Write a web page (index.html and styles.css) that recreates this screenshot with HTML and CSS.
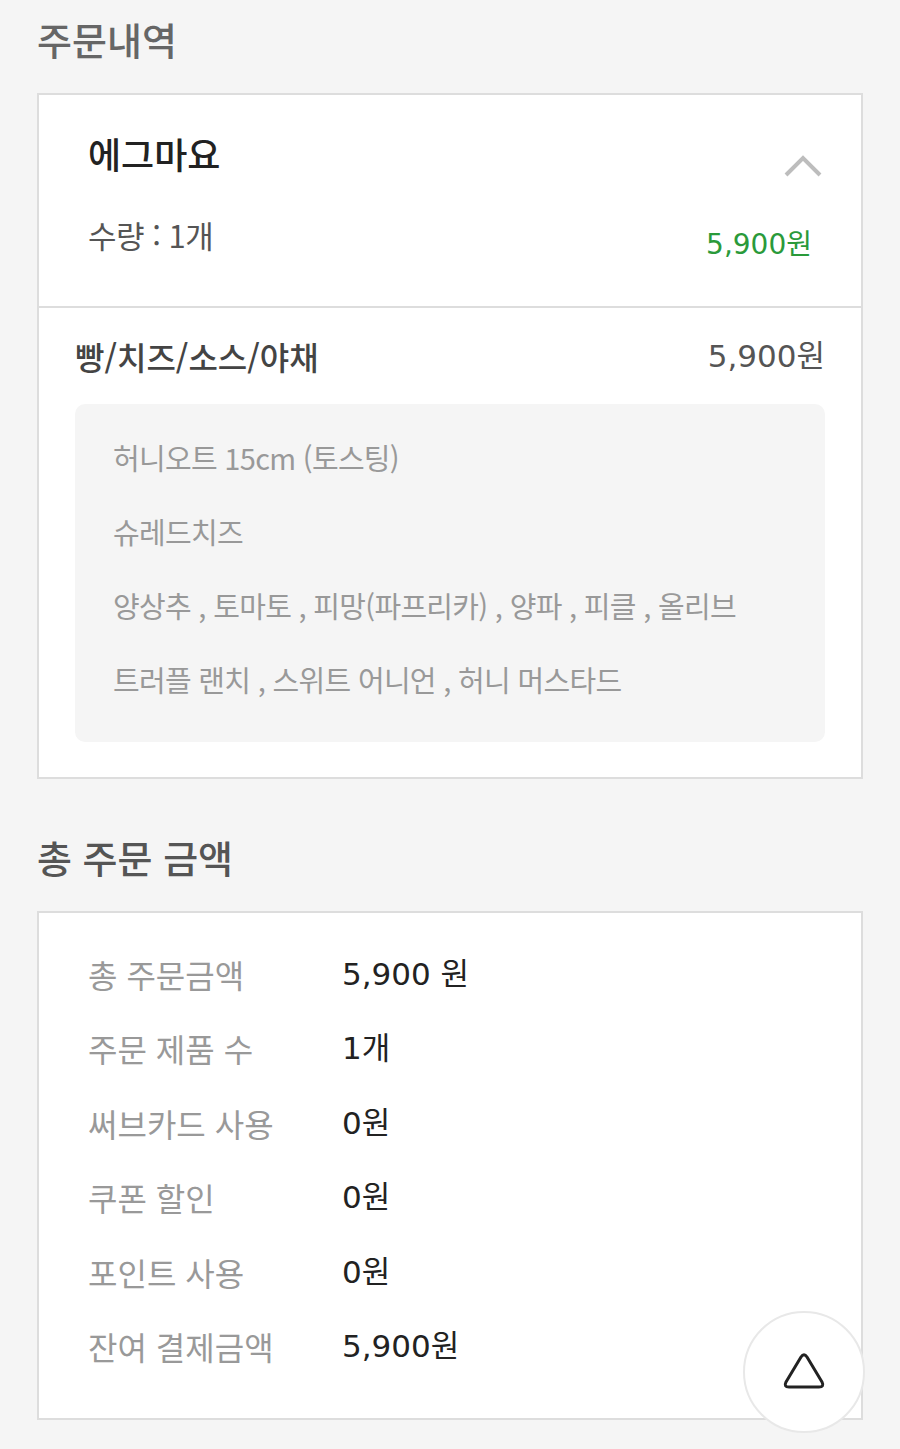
FILE: index.html
```html
<!DOCTYPE html>
<html lang="ko">
<head>
  <meta charset="UTF-8">
  <meta name="viewport" content="width=device-width, initial-scale=1.0">
  <title>주문내역</title>
  <link rel="stylesheet" href="styles.css">
</head>
<body>
  <div class="page">
    <h2 class="section-title">주문내역</h2>

    <div class="card order-card">
      <div class="item-head">
        <div class="item-info">
          <div class="item-name">에그마요</div>
          <div class="item-qty">수량 : 1개</div>
        </div>
        <div class="item-side">
          <svg class="chevron" width="38" height="22" viewBox="0 0 38 22">
            <polyline points="2,20 19,3 36,20" fill="none" stroke="#bdbdbd" stroke-width="4"/>
          </svg>
          <div class="item-price num">5,900원</div>
        </div>
      </div>

      <div class="item-options">
        <div class="option-head">
          <span class="option-title">빵/치즈/소스/야채</span>
          <span class="option-price num">5,900원</span>
        </div>
        <div class="option-box">
          <p>허니오트 15cm (토스팅)</p>
          <p>슈레드치즈</p>
          <p>양상추 , 토마토 , 피망(파프리카) , 양파 , 피클 , 올리브</p>
          <p>트러플 랜치 , 스위트 어니언 , 허니 머스타드</p>
        </div>
      </div>
    </div>

    <h2 class="section-title total-title">총 주문 금액</h2>

    <div class="card summary-card">
      <div class="summary-row"><span class="label">총 주문금액</span><span class="value num">5,900 원</span></div>
      <div class="summary-row"><span class="label">주문 제품 수</span><span class="value num">1개</span></div>
      <div class="summary-row"><span class="label">써브카드 사용</span><span class="value num">0원</span></div>
      <div class="summary-row"><span class="label">쿠폰 할인</span><span class="value num">0원</span></div>
      <div class="summary-row"><span class="label">포인트 사용</span><span class="value num">0원</span></div>
      <div class="summary-row"><span class="label">잔여 결제금액</span><span class="value num">5,900원</span></div>
    </div>
  </div>

  <!-- scroll to top -->
  <button class="top-btn" type="button" aria-label="맨 위로">
    <svg width="48" height="42" viewBox="0 0 48 42">
      <path d="M21 6 Q24 1.5 27 6 L42 31 Q44.5 36 39 36 L9 36 Q3.5 36 6 31 Z" fill="none" stroke="#222" stroke-width="3" stroke-linejoin="round"/>
    </svg>
  </button>
</body>
</html>
```

FILE: styles.css
```css
* {
  box-sizing: border-box;
}

body {
  margin: 0;
  padding: 0;
  background-color: #f5f5f5;
  font-family: "Noto Sans CJK KR", "Noto Sans", sans-serif;
  color: #222222;
}

/* wide digits for prices and counts, hangul falls through to Noto */
.num {
  font-family: "DejaVu Sans", "Noto Sans CJK KR", sans-serif;
}

.page {
  padding: 15px 37px 28px;
}

.section-title {
  margin: 0;
  font-size: 38px;
  line-height: 48px;
  font-weight: 500;
  color: #666666;
}

.total-title {
  margin-top: 54px;
  color: #555555;
}

.card {
  background-color: #ffffff;
  border: 2px solid #dddddd;
}

.order-card {
  margin-top: 30px;
}

/* menu item header */
.item-head {
  display: flex;
  justify-content: space-between;
  padding: 38px 49px 41px 49px;
  border-bottom: 2px solid #dddddd;
}

.item-name {
  font-size: 36px;
  line-height: 40px;
  font-weight: 500;
  color: #222222;
}

.item-qty {
  margin-top: 42px;
  margin-bottom: 10px;
  font-size: 31px;
  line-height: 40px;
  color: #555555;
  letter-spacing: -0.5px;
}

.item-side {
  display: flex;
  flex-direction: column;
  align-items: flex-end;
  justify-content: space-between;
}

.chevron {
  display: block;
  margin-top: 22px;
  margin-right: -10px;
}

.item-price {
  font-size: 28px;
  line-height: 40px;
  color: #2a9a3a;
}

/* options */
.item-options {
  padding: 28px 36px 35px;
}

.option-head {
  display: flex;
  justify-content: space-between;
  font-size: 32px;
  line-height: 40px;
  font-weight: 500;
  color: #444444;
}

.option-price {
  font-size: 31px;
  color: #555555;
  font-weight: 400;
}

.option-box {
  margin-top: 28px;
  padding: 16px 38px 26px;
  background-color: #f5f5f5;
  border-radius: 10px;
}

.option-box p {
  margin: 0;
  font-size: 29px;
  line-height: 74px;
  color: #999999;
  letter-spacing: -0.7px;
}

/* total summary */
.summary-card {
  margin-top: 30px;
  padding: 24px 49px 35px;
}

.summary-row {
  display: flex;
  font-size: 32px;
  line-height: 74.4px;
}

.summary-row .label {
  width: 254px;
  color: #999999;
}

.summary-row .value {
  font-size: 31px;
  color: #222222;
}

.top-btn {
  position: fixed;
  right: 35px;
  bottom: 16px;
  width: 122px;
  height: 122px;
  padding: 0;
  border: 2px solid #e8e8e8;
  border-radius: 50%;
  background-color: #ffffff;
  display: flex;
  align-items: center;
  justify-content: center;
}

.top-btn svg {
  display: block;
}
```
